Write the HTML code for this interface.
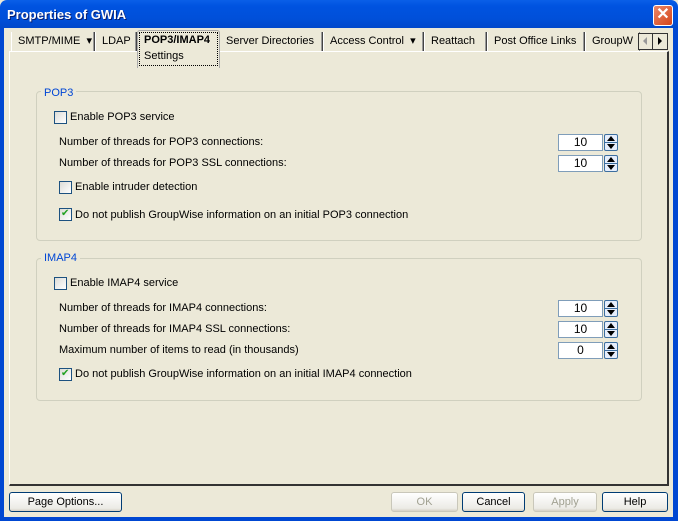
<!DOCTYPE html>
<html><head><meta charset="utf-8"><style>
*{margin:0;padding:0;box-sizing:border-box}
body{width:678px;height:521px;overflow:hidden;font-family:Tahoma,"Liberation Sans",sans-serif;font-size:11px;color:#000;background:#ECE9D8;position:relative}
.a{position:absolute}
.t{position:absolute;white-space:nowrap;font-size:11px;line-height:13px}
.cb{position:absolute;width:13px;height:13px;border:1px solid #1C5180;background:linear-gradient(135deg,#DCDCD7,#FFFFFF)}
.inp{position:absolute;width:45px;height:17px;border:1px solid #7F9DB9;background:#fff;text-align:center;font-size:12px;line-height:15px}
.sp{position:absolute;width:14px;height:17px;border:1px solid #3C6E9F;border-radius:2px;background:#E6EEFC}
.sp:before{content:"";position:absolute;left:2px;top:1px;border-left:4px solid transparent;border-right:4px solid transparent;border-bottom:5px solid #000}
.sp:after{content:"";position:absolute;left:2px;top:9px;border-left:4px solid transparent;border-right:4px solid transparent;border-top:5px solid #000}
.sp i{position:absolute;left:0;right:0;top:7px;height:1px;background:#3C6E9F}
.grp{position:absolute;border:1px solid #D0D0BF;border-radius:4px}
.gl{position:absolute;background:#ECE9D8;color:#0046D5;padding:0 3px;font-size:11px;line-height:13px}
.btn{position:absolute;height:20px;border:1px solid #003C74;border-radius:3px;background:linear-gradient(#FFFFFF,#ECEBE6 85%,#D6D0C5);text-align:center;line-height:18px;font-size:11px}
.dis{border-color:#C9C7BA;color:#A1A192}
.tab{position:absolute;top:32px;height:19px;border-left:1px solid #fff;border-right:1px solid #444;box-shadow:inset -1px 0 #999;line-height:18px;padding-left:6px;white-space:nowrap;font-size:11px}
.chk:after{content:"✔";position:absolute;left:1px;top:-1px;color:#21A121;font-size:10px;line-height:11px}
</style></head><body>
<div class="a" style="left:0;top:0;width:678px;height:30px;background:linear-gradient(#0A5FE8,#0053E0 20%,#0050DA 60%,#0046C8);border-radius:7px 7px 0 0"></div>
<div class="a" style="left:0;top:28px;width:4px;height:493px;background:#0047D2"></div>
<div class="a" style="right:0;top:28px;width:5px;height:493px;background:#0047D2"></div>
<div class="a" style="left:0;bottom:0;width:678px;height:4px;background:#0047D2"></div>
<div class="t" style="left:7px;top:7px;color:#fff;font-weight:bold;font-size:13px;line-height:16px;font-family:'Liberation Sans',sans-serif;text-shadow:1px 1px #0A1E6E">Properties of GWIA</div>
<div class="a" style="left:653px;top:5px;width:20px;height:21px;border:1px solid #fff;border-radius:3px;background:linear-gradient(135deg,#E8876A,#D64418);color:#fff;font-weight:bold;text-align:center;font-size:16px;line-height:18px;font-family:'Liberation Sans',sans-serif">✕</div>
<div class="a" style="left:4px;top:28px;width:669px;height:24px;background:#ECE9D8"></div>
<div class="tab" style="left:11px;width:84px">SMTP/MIME&nbsp; ▾</div>
<div class="tab" style="left:95px;width:42px">LDAP</div>
<div class="tab" style="left:219px;width:104px">Server Directories</div>
<div class="tab" style="left:323px;width:101px">Access Control&nbsp; ▾</div>
<div class="tab" style="left:424px;width:63px">Reattach</div>
<div class="tab" style="left:487px;width:98px">Post Office Links</div>
<div class="tab" style="left:585px;width:55px;border-right:1px dashed #888;box-shadow:none;overflow:hidden">GroupW</div>
<div class="a" style="left:638px;top:33px;width:30px;height:17px;border:1px solid #333;background:#ECE9D8"></div>
<div class="a" style="left:652px;top:33px;width:1px;height:17px;background:#333"></div>
<div class="a" style="left:643px;top:37px;border-top:4px solid transparent;border-bottom:4px solid transparent;border-right:4px solid #999"></div>
<div class="a" style="left:658px;top:37px;border-top:4px solid transparent;border-bottom:4px solid transparent;border-left:4px solid #000"></div>
<div class="a" style="left:9px;top:51px;width:660px;height:435px;border-top:1px solid #fff;border-left:1px solid #fff;border-right:2px solid #333;border-bottom:2px solid #333;background:#ECE9D8"></div>
<div class="a" style="left:137px;top:30px;width:83px;height:38px;background:#ECE9D8;border:1px solid #aaa;border-bottom:none;border-radius:3px 3px 0 0"></div>
<div class="a" style="left:139px;top:32px;width:79px;height:34px;border:1px dotted #000"></div>
<div class="t" style="left:144px;top:34px;font-weight:bold">POP3/IMAP4</div>
<div class="t" style="left:144px;top:50px">Settings</div>
<div class="grp" style="left:36px;top:91px;width:606px;height:150px"></div>
<div class="gl" style="left:41px;top:87px">POP3</div>
<div class="cb" style="left:54px;top:111px"></div><div class="t" style="left:70px;top:111px">Enable POP3 service</div>
<div class="t" style="left:59px;top:136px">Number of threads for POP3 connections:</div>
<div class="inp" style="left:558px;top:134px">10</div><div class="sp" style="left:604px;top:134px"><i></i></div>
<div class="t" style="left:59px;top:157px">Number of threads for POP3 SSL connections:</div>
<div class="inp" style="left:558px;top:155px">10</div><div class="sp" style="left:604px;top:155px"><i></i></div>
<div class="cb" style="left:59px;top:181px"></div><div class="t" style="left:75px;top:181px">Enable intruder detection</div>
<div class="cb chk" style="left:59px;top:208px"></div><div class="t" style="left:75px;top:209px">Do not publish GroupWise information on an initial POP3 connection</div>
<div class="grp" style="left:36px;top:258px;width:606px;height:143px"></div>
<div class="gl" style="left:41px;top:252px">IMAP4</div>
<div class="cb" style="left:54px;top:277px"></div><div class="t" style="left:70px;top:277px">Enable IMAP4 service</div>
<div class="t" style="left:59px;top:302px">Number of threads for IMAP4 connections:</div>
<div class="inp" style="left:558px;top:300px">10</div><div class="sp" style="left:604px;top:300px"><i></i></div>
<div class="t" style="left:59px;top:323px">Number of threads for IMAP4 SSL connections:</div>
<div class="inp" style="left:558px;top:321px">10</div><div class="sp" style="left:604px;top:321px"><i></i></div>
<div class="t" style="left:59px;top:344px">Maximum number of items to read (in thousands)</div>
<div class="inp" style="left:558px;top:342px">0</div><div class="sp" style="left:604px;top:342px"><i></i></div>
<div class="cb chk" style="left:59px;top:368px"></div><div class="t" style="left:75px;top:368px">Do not publish GroupWise information on an initial IMAP4 connection</div>
<div class="btn" style="left:9px;top:492px;width:113px">Page Options...</div>
<div class="btn dis" style="left:391px;top:492px;width:67px">OK</div>
<div class="btn" style="left:462px;top:492px;width:63px">Cancel</div>
<div class="btn dis" style="left:533px;top:492px;width:64px">Apply</div>
<div class="btn" style="left:602px;top:492px;width:66px">Help</div>
</body></html>
